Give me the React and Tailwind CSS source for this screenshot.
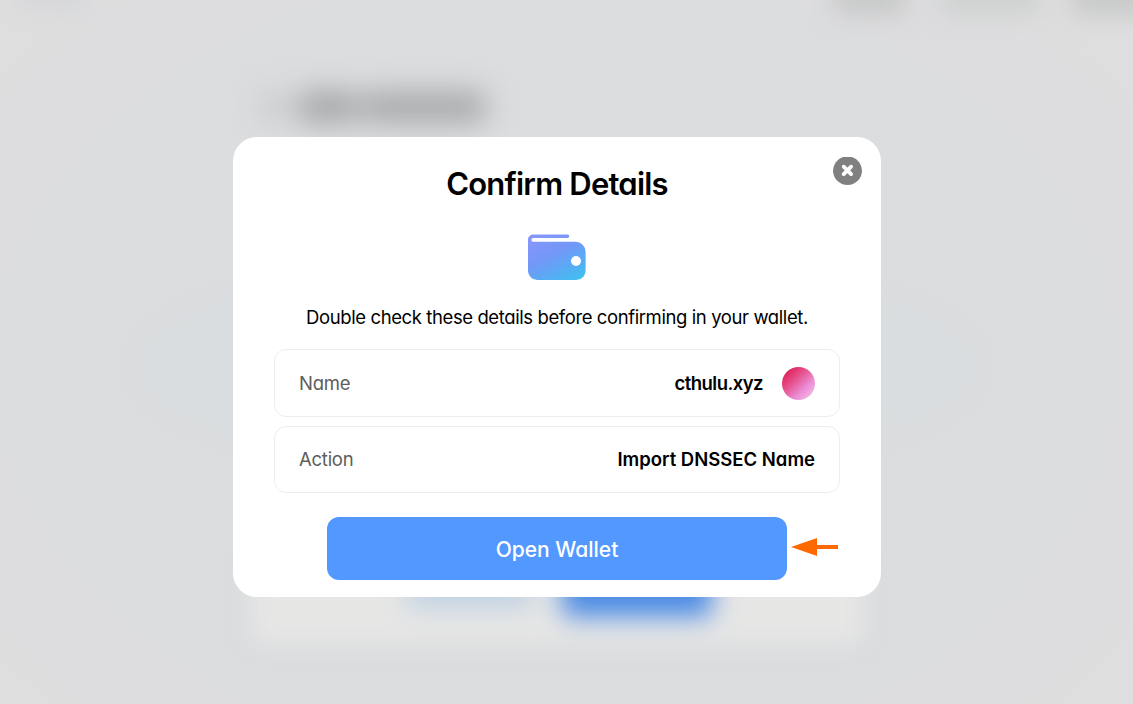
function Backdrop() {
  return (
    <div
      aria-hidden="true"
      className="absolute inset-0 flex flex-col overflow-hidden bg-[radial-gradient(ellipse_100%_115%_at_49%_52%,#dbdddf_0%,#dbdddf_42%,#dddddf_52%,#dfe0df_80%)]"
    >
      <header className="-mt-5 flex h-[34px] shrink-0 items-end pl-5 blur-[12px]">
        <div className="mb-2 mr-auto h-6 w-[65px] bg-[#d3d4d6]" />
        <div className="h-full w-[70px] bg-[#c6c7c7]" />
        <div className="ml-[35px] h-[30px] w-[100px] bg-[#ced0d0]" />
        <div className="-mr-5 ml-8 h-full w-[81px] bg-[#c6c7c7]" />
      </header>
      <div className="ml-[252px] mt-[77px] flex shrink-0 items-center gap-3 pl-2.5 blur-[14px]">
        <div className="h-7 w-6 bg-[#c8c9cb]" />
        <div className="h-8 w-[60px] rounded-lg bg-[#a6a7a8]" />
        <div className="-ml-2 h-8 w-[124px] rounded-lg bg-[#a9aaab]" />
      </div>
      <div className="mt-[123px] flex h-[240px] shrink-0 items-center justify-center pr-[19px]">
        <div className="h-[210px] w-[830px] rounded-[50%] bg-[#d9dddf] blur-[10px]" />
      </div>
      <div className="ml-[252px] mt-[67px] flex h-[90px] w-[610px] shrink-0 items-start gap-[30px] bg-[#e6e6e5] pl-[156px] blur-[11px]">
        <div className="h-[54px] w-[124px] bg-[#bfd1e4] blur-[8px]" />
        <div className="h-[64px] w-[150px] rounded-lg bg-[#4b8be5] blur-[7px]" />
      </div>
    </div>
  );
}

function WalletIcon() {
  return (
    <svg className="mt-[30px] h-[46px] w-[58px] shrink-0" viewBox="0 0 58 46">
      <defs>
        <linearGradient id="wallet" x1="12" y1="0" x2="38" y2="50" gradientUnits="userSpaceOnUse">
          <stop offset="0" stopColor="#8697fa" />
          <stop offset="0.42" stopColor="#7397f8" />
          <stop offset="1" stopColor="#43bcf0" />
        </linearGradient>
      </defs>
      <path
        fillRule="evenodd"
        fill="url(#wallet)"
        d="M5 0.5H39.5a1.8 1.8 0 0 1 0 3.6H5.3a1.8 1.8 0 0 0 0 3.7H47.5A10 10 0 0 1 57.6 17.8V36.5A9.3 9.3 0 0 1 48.3 46H9.3A9.3 9.3 0 0 1 0 36.5V5.5A5 5 0 0 1 5 0.5ZM48 22a5 5 0 1 0 0 10a5 5 0 1 0 0-10Z"
      />
    </svg>
  );
}

function DetailRow({ label, children, className }) {
  return (
    <div className={`flex w-full shrink-0 items-center justify-between rounded-[12px] border border-[#ededed] px-6 text-[18.5px] leading-6 ${className}`}>
      <span className="tracking-[-0.25px] text-[#5d5d5d]">{label}</span>
      <div className="flex items-center gap-[19px] font-semibold text-black">{children}</div>
    </div>
  );
}

export default function App() {
  return (
    <div className="relative flex h-[704px] w-[1133px] items-start justify-center overflow-hidden pr-[19px] pt-[137px] font-['Inter','Liberation_Sans',sans-serif] text-black [font-feature-settings:'cv11']">
      <Backdrop />
      <main role="dialog" className="relative flex h-[460px] w-[648px] flex-col items-center rounded-[24px] bg-white px-[41px] pt-[27px]">
        <button aria-label="Close" className="absolute right-[19px] top-[20px] h-7 w-[29px]">
          <svg className="h-7 w-[29px]" viewBox="0 0 29 28">
            <path fill="#808080" d="M10 0H19A14.4 14.4 0 0 1 29 13.5A14.5 14.5 0 0 1 0 13.5A14.4 14.4 0 0 1 10 0Z" />
            <path d="M10.7 9.7L18.1 17.1M18.1 9.7L10.7 17.1" stroke="#fff" strokeWidth="3.8" strokeLinecap="round" />
          </svg>
        </button>
        <h1 className="whitespace-nowrap text-[31px] font-semibold leading-10 tracking-[-0.78px]">Confirm Details</h1>
        <WalletIcon />
        <p className="mt-[25px] whitespace-nowrap text-[18.5px] leading-6 tracking-[-0.4px]">
          Double check these details before confirming in your wallet.
        </p>
        <DetailRow label="Name" className="mt-5 h-[68px]">
          <span className="tracking-[-0.55px]">cthulu.xyz</span>
          <span className="size-[33px] rounded-full bg-[linear-gradient(135deg,#e0205a_12%,#e6508a_38%,#eb8dd6_67%,#f5c2e8_95%)]" />
        </DetailRow>
        <DetailRow label="Action" className="mt-[9px] h-[67px] pb-px">
          <span>Import DNSSEC Name</span>
        </DetailRow>
        <div className="relative mt-6">
          <button className="flex h-[63px] w-[460px] items-center justify-center rounded-[12px] bg-[#5298ff] pt-0.5 text-[21px] font-medium leading-7 text-white">
            Open Wallet
          </button>
          <svg className="absolute left-full top-[20px] ml-1 h-5 w-12" viewBox="0 0 48 20">
            <path d="M0 10L26 1V8H47V12H26V19Z" fill="#ff6a00" />
          </svg>
        </div>
      </main>
    </div>
  );
}
